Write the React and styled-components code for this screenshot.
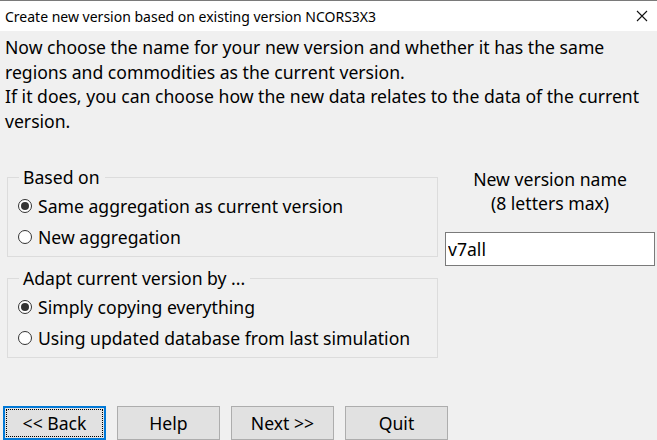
import styled, { createGlobalStyle } from 'styled-components';

const GlobalStyle = createGlobalStyle`
  html, body {
    margin: 0;
    padding: 0;
    background: #f0f0f0;
  }
  body {
    font-family: "Noto Sans", "Open Sans", sans-serif;
    color: #000;
  }
`;

export default function App() {
  return (
    <>
      <GlobalStyle />
      <Window>
        <TitleBar>
          <Title>Create new version based on existing version NCORS3X3</Title>
          <CloseIcon viewBox="0 0 12 12">
            <path d="M1 1 L11 11 M11 1 L1 11" stroke="#111" strokeWidth="1.1" fill="none" />
          </CloseIcon>
        </TitleBar>
        <Content>
          <Intro>
            Now choose the name for your new version and whether it has the same<br />
            regions and commodities as the current version.<br />
            If it does, you can choose how the new data relates to the data of the current<br />
            version.
          </Intro>
          <Middle>
            <Groups>
              <Group>
                <Legend>Based on</Legend>
                <Radio checked label="Same aggregation as current version" />
                <Radio label="New aggregation" />
              </Group>
              <Group>
                <Legend>Adapt current version by ...</Legend>
                <Radio checked label="Simply copying everything" />
                <Radio label="Using updated database from last simulation" />
              </Group>
            </Groups>
            <NamePanel>
              <NameLabel>New version name<br />(8 letters max)</NameLabel>
              <NameInput defaultValue="v7all" />
            </NamePanel>
          </Middle>
          <Buttons>
            <Button $focused><FocusRing>&lt;&lt; Back</FocusRing></Button>
            <Button>Help</Button>
            <Button>Next &gt;&gt;</Button>
            <Button>Quit</Button>
          </Buttons>
        </Content>
      </Window>
    </>
  );
}

function Radio({ checked, label }) {
  return (
    <RadioRow>
      <RadioCircle $checked={checked} />
      <RadioText>{label}</RadioText>
    </RadioRow>
  );
}

const Window = styled.div`
  width: 657px;
  height: 440px;
  overflow: hidden;
  display: flex;
  flex-direction: column;
  background: #f0f0f0;
`;

const TitleBar = styled.div`
  height: 30px;
  flex: none;
  background: #fff;
  border-top: 1px solid #7a7a7a;
  display: flex;
  align-items: center;
  justify-content: space-between;
  padding: 0 9px 0 5px;
`;

const Title = styled.div`
  font-size: 14px;
  color: #000;
`;

const CloseIcon = styled.svg`
  width: 12px;
  height: 12px;
`;

const Content = styled.div`
  display: flex;
  flex-direction: column;
  padding: 4px 0 0 0;
`;

const Intro = styled.p`
  margin: 0;
  padding: 0 5px;
  font-size: 17.6px;
  line-height: 24.5px;
  white-space: nowrap;
`;

const Middle = styled.div`
  display: flex;
  margin-top: 33px;
`;

const Groups = styled.div`
  display: flex;
  flex-direction: column;
  gap: 10px;
  margin-left: 7px;
  width: 431px;
`;

const Group = styled.fieldset`
  margin: 0;
  padding: 2px 0 4px 10px;
  border: 1px solid #dcdcdc;
  min-width: 0;
  box-sizing: border-box;
  height: 91px;
`;

const Legend = styled.legend`
  font-size: 17.6px;
  padding: 0 5px 0 4px;
  margin-left: 1px;
  line-height: 22px;
`;

const RadioRow = styled.div`
  display: flex;
  align-items: center;
  height: 31px;
  gap: 6px;
`;

const RadioCircle = styled.span`
  width: 14px;
  height: 14px;
  box-sizing: border-box;
  border: 1px solid #333;
  border-radius: 50%;
  background: #fff;
  display: flex;
  align-items: center;
  justify-content: center;
  flex: none;

  &::after {
    content: '';
    width: 8px;
    height: 8px;
    border-radius: 50%;
    background: ${p => (p.$checked ? '#333' : 'transparent')};
  }
`;

const RadioText = styled.span`
  font-size: 17.6px;
`;

const NamePanel = styled.div`
  display: flex;
  flex-direction: column;
  margin-left: 7px;
  width: 210px;
`;

const NameLabel = styled.div`
  text-align: center;
  font-size: 17.6px;
  line-height: 24px;
  margin-top: 1px;
`;

const NameInput = styled.input`
  margin-top: 17px;
  height: 34px;
  box-sizing: border-box;
  border: 1px solid #7a7a7a;
  background: #fff;
  font-family: inherit;
  font-size: 17.6px;
  padding: 0 2px;
  outline: none;
  width: 210px;
`;

const Buttons = styled.div`
  display: flex;
  gap: 11px;
  margin: 48px 0 0 3px;
`;

const Button = styled.button`
  width: 103px;
  height: 34px;
  box-sizing: border-box;
  background: #e1e1e1;
  border: ${p => (p.$focused ? '2px solid #0078d7' : '1px solid #adadad')};
  font-family: inherit;
  font-size: 17.6px;
  color: #000;
  padding: ${p => (p.$focused ? '1px' : '0')};
  display: flex;
  align-items: center;
  justify-content: center;
`;

const FocusRing = styled.span`
  flex: 1;
  align-self: stretch;
  display: flex;
  align-items: center;
  justify-content: center;
  border: 1px dotted #000;
`;
